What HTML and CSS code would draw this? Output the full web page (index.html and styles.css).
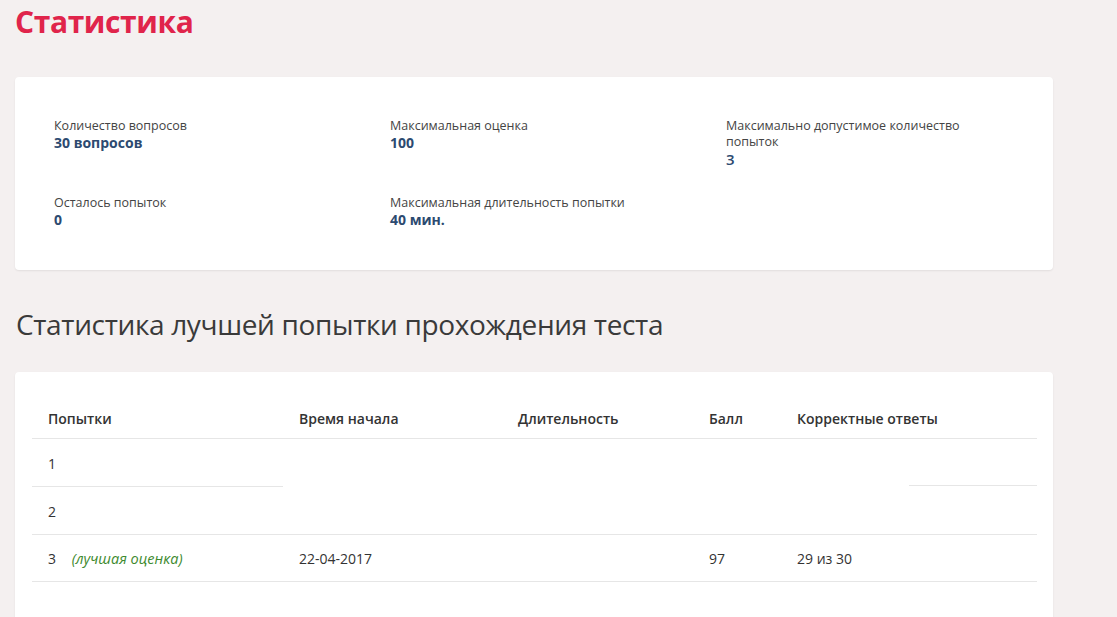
FILE: index.html
```html
<!DOCTYPE html>
<html lang="ru">
<head>
  <meta charset="UTF-8" />
  <meta name="viewport" content="width=device-width, initial-scale=1.0" />
  <title>Статистика</title>
  <link rel="stylesheet" href="styles.css">
</head>
<body>
  <div class="page">
    <h1 class="title">Статистика</h1>

    <div class="card info">
      <div class="info-grid">
        <div class="info-item">
          <div class="label">Количество вопросов</div>
          <div class="value">30 вопросов</div>
        </div>
        <div class="info-item">
          <div class="label">Максимальная оценка</div>
          <div class="value">100</div>
        </div>
        <div class="info-item">
          <div class="label">Максимально допустимое количество попыток</div>
          <div class="value light">3</div>
        </div>
        <div class="info-item">
          <div class="label">Осталось попыток</div>
          <div class="value">0</div>
        </div>
        <div class="info-item">
          <div class="label">Максимальная длительность попытки</div>
          <div class="value">40 мин.</div>
        </div>
      </div>
    </div>

    <h2 class="subtitle">Статистика лучшей попытки прохождения теста</h2>

    <div class="card results">
      <table class="attempts">
        <thead>
          <tr>
            <th class="c-num">Попытки</th>
            <th class="c-start">Время начала</th>
            <th class="c-dur">Длительность</th>
            <th class="c-score">Балл</th>
            <th class="c-correct">Корректные ответы</th>
          </tr>
        </thead>
        <tbody>
          <tr class="partial">
            <td class="lined">1</td>
            <td></td>
            <td></td>
            <td></td>
            <td class="half-line"></td>
          </tr>
          <tr>
            <td>2</td>
            <td></td>
            <td></td>
            <td></td>
            <td></td>
          </tr>
          <tr>
            <td>3 <span class="best">(лучшая оценка)</span></td>
            <td>22-04-2017</td>
            <td></td>
            <td>97</td>
            <td>29 из 30</td>
          </tr>
        </tbody>
      </table>
    </div>
  </div>
</body>
</html>
```

FILE: styles.css
```css
* {
  box-sizing: border-box;
}
body {
  margin: 0;
  background: #f4f0f0;
  font-family: 'Open Sans', sans-serif;
  color: #333;
}
.page {
  width: 1038px;
  margin-left: 15px;
  padding-top: 2px;
}
.title {
  margin: 0 0 35px;
  font-size: 30px;
  font-weight: 700;
  color: #e0244b;
  letter-spacing: -0.4px;
  line-height: 40px;
}
.card {
  background: #fff;
  border-radius: 4px;
  box-shadow: 0 1px 2px rgba(0, 0, 0, 0.08);
}
.info {
  height: 193px;
  padding: 41px 0 0 39px;
}
.info-grid {
  display: grid;
  grid-template-columns: 336px 336px 250px;
  row-gap: 21px;
}
.info-item {
  min-height: 56px;
}
.label {
  font-size: 12.5px;
  line-height: 16px;
  color: #444;
}
.value {
  font-size: 14px;
  font-weight: 700;
  line-height: 18px;
  color: #2c4a70;
}
.value.light {
  font-weight: 600;
  font-size: 15px;
}
.subtitle {
  margin: 36px 0 30px 1px;
  font-size: 28px;
  font-weight: 400;
  line-height: 36px;
  color: #3a3a3a;
  letter-spacing: -0.35px;
}
.results {
  padding: 24px 16px 40px 17px;
}
.attempts {
  width: 100%;
  border-collapse: collapse;
  font-size: 14px;
}
.attempts th {
  text-align: left;
  font-weight: 600;
  color: #333;
  height: 42px;
  padding: 4px 16px 0;
  border-bottom: 1px solid #e6e6e6;
}
.attempts td {
  height: 48px;
  padding: 2px 16px 0;
  border-bottom: 1px solid #e6e6e6;
  color: #333;
}
.attempts tr:last-child td {
  height: 47px;
}
.c-num { width: 251px; }
.c-start { width: 219px; }
.c-dur { width: 191px; }
.c-score { width: 88px; }
.partial td {
  border-bottom-color: transparent;
}
.partial td.lined {
  border-bottom-color: #e6e6e6;
}
.partial td.half-line {
  background: linear-gradient(to right, transparent 128px, #e6e6e6 128px) bottom / 100% 1px no-repeat;
}
.best {
  margin-left: 12px;
  font-style: italic;
  font-size: 14.5px;
  color: #3d8a2e;
}
```
